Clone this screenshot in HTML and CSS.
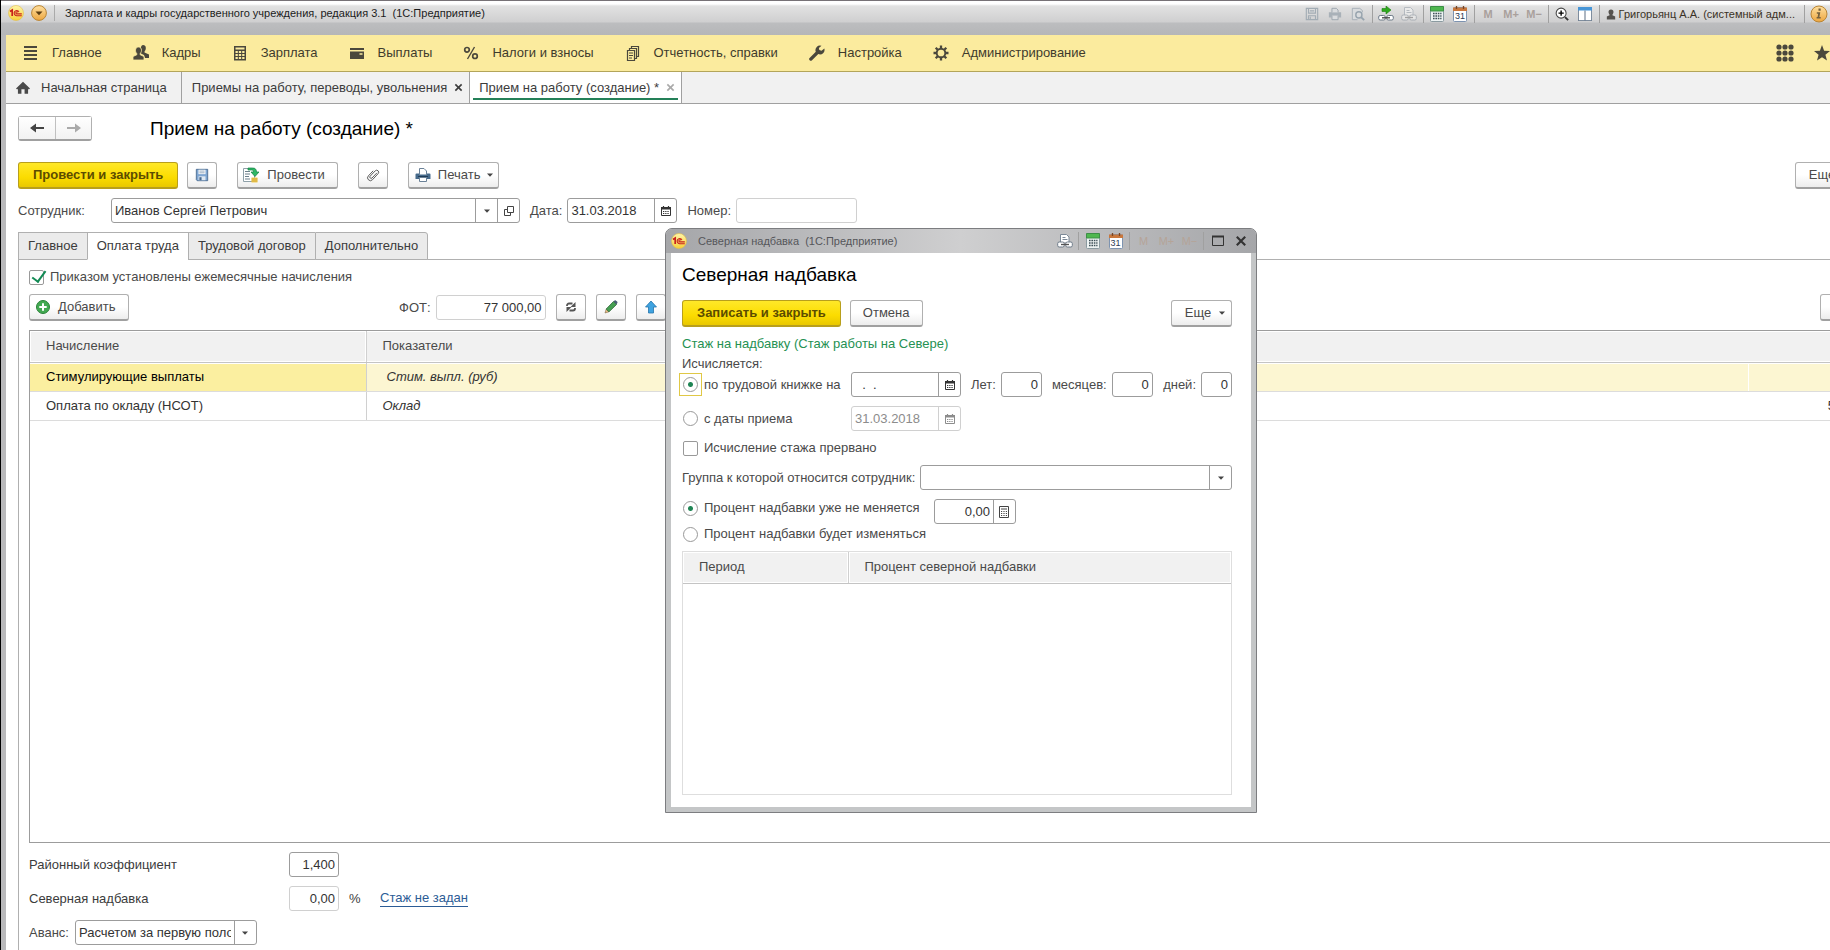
FILE: index.html
```html
<!DOCTYPE html>
<html lang="ru">
<head>
    <meta charset="UTF-8">
    <meta name="viewport" content="width=device-width, initial-scale=1.0">
    <title>Зарплата и кадры государственного учреждения, редакция 3.1</title>
    <link rel="stylesheet" href="styles.css">
</head>
<body>

    <svg class="sprite" xmlns="http://www.w3.org/2000/svg">
        <defs>
            <linearGradient id="g-sun" x1="0" y1="0" x2="0" y2="1"><stop offset="0" stop-color="#fff6a8"/><stop offset="1" stop-color="#f7cf3a"/></linearGradient>
            <linearGradient id="g-orange" x1="0" y1="0" x2="0" y2="1"><stop offset="0" stop-color="#ffe0a0"/><stop offset="1" stop-color="#eda63f"/></linearGradient>
        </defs>
        <symbol id="logo" viewBox="0 0 16 16">
            <circle cx="8" cy="8" r="7.5" fill="url(#g-sun)" stroke="#e3bd4a" stroke-width=".6"/>
            <path d="M2 6.5L4.2 5v6" fill="none" stroke="#c8201c" stroke-width="1.7"/>
            <path d="M11 6.8a2.6 2.6 0 1 0-2.4 3.9h5.2M10 7.4a1.1 1.1 0 1 0-1.2 1.5h5" fill="none" stroke="#c8201c" stroke-width="1.1"/>
        </symbol>
        <symbol id="round-down" viewBox="0 0 16 16">
            <circle cx="8" cy="8" r="7.4" fill="url(#g-orange)" stroke="#b98535"/>
            <path d="M4.5 6.5h7L8 10.3z" fill="#5a3c12"/>
        </symbol>
        <symbol id="floppy" viewBox="0 0 16 16">
            <path d="M1.5 1.5h13v13h-12l-1-1z" fill="#7fa6d2" stroke="#48698f"/>
            <path d="M4 2h8v5H4z" fill="#fff"/>
            <path d="M5 3.5h6M5 5.5h6" stroke="#8aa0b8"/>
            <path d="M4 9.5h8V14H4z" fill="#dfe8f2"/>
            <path d="M5 10.5h2.5V14H5z" fill="#48698f"/>
        </symbol>
        <symbol id="floppy-off" viewBox="0 0 16 16">
            <path d="M1.5 1.5h13v13h-13zM4 2v5h8V2M5.5 4.5h5M4 14.5V10h8v4.5M6 11v3" fill="none" stroke="#a2acb4" stroke-width="1.3"/>
        </symbol>
        <symbol id="printer-off" viewBox="0 0 16 16">
            <path d="M1 6h14v6h-3V10H4v2H1z" fill="#a9b1b8"/>
            <path d="M4.5 6V1.5h5l2 2V6M4.5 10v4.5h7V10" fill="#dadcde" stroke="#98a2aa"/>
        </symbol>
        <symbol id="preview-off" viewBox="0 0 16 16">
            <path d="M13 6V4l-3-2.5H1.5v13h6" fill="#d9dcde" stroke="#a2acb4"/>
            <circle cx="9" cy="9" r="3.5" fill="none" stroke="#97a4ae" stroke-width="1.6"/>
            <path d="M11.5 11.5l3.5 3.5" stroke="#97a4ae" stroke-width="2.2"/>
        </symbol>
        <symbol id="link-add" viewBox="0 0 16 16">
            <path d="M4 2.5h4V0l5 4-5 4V5.5H4z" fill="#2faa1e" stroke="#1b7c12" stroke-width=".6"/>
            <rect x=".7" y="9.5" width="6.500" height="4.500" rx="1.500" fill="#fff" stroke="#6d7a88"/>
            <rect x="8.800" y="9.500" width="6.500" height="4.500" rx="1.500" fill="#fff" stroke="#6d7a88"/>
            <path d="M4 11.800h8" stroke="#444" stroke-width="1.300"/>
        </symbol>
        <symbol id="link-print" viewBox="0 0 16 16">
            <path d="M3.500 9V1.500h6l2.500 2.500V9" fill="#fff" stroke="#7c8997"/>
            <path d="M5.500 4.500h3M5.500 6.500h5" stroke="#7c8997"/>
            <rect x=".7" y="9" width="6.500" height="5" rx="1.500" fill="#fff" stroke="#6d7a88"/>
            <rect x="8.800" y="9" width="6.500" height="5" rx="1.500" fill="#fff" stroke="#6d7a88"/>
            <path d="M4 11.500h8" stroke="#555" stroke-width="1.300"/>
        </symbol>
        <symbol id="calc" viewBox="0 0 16 16">
            <rect x="1.500" y=".5" width="13" height="15" rx="1" fill="#eef3f3" stroke="#8a9aa0"/>
            <path d="M1.500 .5h13v4.500h-13z" fill="#4fb74f" stroke="#3c8f46"/>
            <path d="M4 7.500h8.500M4 10h8.500M4 12.500h8.500" stroke="#3e5058" stroke-width="1.500" stroke-dasharray="1.600 .8"/>
        </symbol>
        <symbol id="day-sheet" viewBox="0 0 16 16">
            <rect x="1.500" y="1.500" width="13" height="14" rx="1" fill="#fff" stroke="#7d93b0"/>
            <path d="M1 1.500h14V5H1z" fill="#c9773c"/>
            <path d="M4.500 0v3M11.500 0v3" stroke="#7b4520" stroke-width="1.300"/>
        </symbol>
        <symbol id="zoom" viewBox="0 0 16 16">
            <circle cx="7" cy="7" r="5.700" fill="#fff" stroke="#454545" stroke-width="1.200"/>
            <path d="M7 4v6M4 7h6" stroke="#000" stroke-width="1.600"/>
            <path d="M11.500 11.500l3.500 3.500" stroke="#333" stroke-width="2.200"/>
        </symbol>
        <symbol id="split" viewBox="0 0 16 16">
            <rect x=".5" y=".5" width="15" height="15" fill="#fff" stroke="#6f7f92"/>
            <path d="M0 0h16v4H0z" fill="#4795d6"/>
            <path d="M8 4v12" stroke="#6f7f92" stroke-width="1.300"/>
        </symbol>
        <symbol id="user" viewBox="0 0 12 14">
            <path d="M6 1a3 3 0 0 1 3 3c0 1.500-.8 2.500-1.300 3.200V8l3.300 1.500V13H1V9.500L4.300 8v-.8C3.800 6.500 3 5.500 3 4a3 3 0 0 1 3-3z" fill="#55524e"/>
        </symbol>
        <symbol id="info" viewBox="0 0 18 18">
            <circle cx="9" cy="9" r="8" fill="url(#g-orange)" stroke="#b98535"/>
            <path d="M8.500 3.500h2.200v2.200H8.500zM6.800 7.200h3.500L9.400 12h1.300v1.400H6.600V12h1l.6-3.300H6.800z" fill="#75603d"/>
        </symbol>
        <symbol id="list" viewBox="0 0 16 16"><path d="M1 2h13M1 6h13M1 10h13M1 14h13" stroke="#4b483c" stroke-width="2"/></symbol>
        <symbol id="people" viewBox="0 0 16 16">
            <path d="M10 0a3 3 0 0 1 2.800 3.200c0 1.400-.5 2.400-1.300 3.200v1.200L16 9.500V13h-4l-1-3-3-1.500V2.500C8 1 9 0 10 0z" fill="#4b483c"/>
            <path d="M5.500 2c1.900 0 3 1.400 3 3.200S7.600 8 7.200 8.600v1.200L11 11.500V15H0v-3.500l3.800-1.700V8.600C3.300 8 2.500 7 2.500 5.200S3.600 2 5.500 2z" fill="#4b483c" stroke="#fbeb9e" stroke-width=".8"/>
        </symbol>
        <symbol id="abacus" viewBox="0 0 16 16">
            <path d="M2 1h12v14.500H2z" fill="#4b483c"/>
            <path d="M3.500 2.500h9v2h-9z" fill="#fbeb9e"/>
            <path d="M3.500 7h9M3.500 10h9M3.500 13h9" stroke="#fbeb9e" stroke-width="2" stroke-dasharray="2.300 1.050"/>
        </symbol>
        <symbol id="wallet" viewBox="0 0 16 16">
            <path d="M1 3h14v2H1zM1 6.500h14V14H1z" fill="#4b483c"/>
            <path d="M10.500 9h3" stroke="#fbeb9e" stroke-width="1.500"/>
        </symbol>
        <symbol id="percent" viewBox="0 0 16 16">
            <circle cx="4" cy="4.800" r="2.300" fill="none" stroke="#4b483c" stroke-width="1.700"/>
            <circle cx="12" cy="11.200" r="2.300" fill="none" stroke="#4b483c" stroke-width="1.700"/>
            <path d="M11.500 2L4.500 14" stroke="#4b483c" stroke-width="1.400"/>
        </symbol>
        <symbol id="papers" viewBox="0 0 16 16">
            <path d="M2.500 5.500h7v10h-7zM4.500 5V3.500h7v10H10M6.500 3V1.500h7v10H12" fill="none" stroke="#4b483c" stroke-width="1.200"/>
            <path d="M4 8h4M4 10.500h4M4 13h3" stroke="#4b483c"/>
        </symbol>
        <symbol id="wrench" viewBox="0 0 16 16">
            <path d="M12.500 .8a4.500 4.500 0 0 0-5.700 5.900L.6 12.900a1.500 1.500 0 0 0 2.400 2.300L9.300 9a4.500 4.500 0 0 0 6-5.600L12.500 5.700 10.300 5l-.4-2z" fill="#4b483c"/>
        </symbol>
        <symbol id="gear" viewBox="0 0 16 16">
            <circle cx="8" cy="8" r="4.300" fill="none" stroke="#4b483c" stroke-width="1.900"/>
            <path d="M8 .5v3M8 12.500v3M.5 8h3M12.500 8h3M2.700 2.700l2 2M11.300 11.300l2 2M13.300 2.700l-2 2M4.700 11.300l-2 2" stroke="#4b483c" stroke-width="2.300"/>
        </symbol>
        <symbol id="dots" viewBox="0 0 18 18">
            <g fill="#4b483c"><circle cx="3" cy="3" r="2.600"/><circle cx="9" cy="3" r="2.600"/><circle cx="15" cy="3" r="2.600"/><circle cx="3" cy="9" r="2.600"/><circle cx="9" cy="9" r="2.600"/><circle cx="15" cy="9" r="2.600"/><circle cx="3" cy="15" r="2.600"/><circle cx="9" cy="15" r="2.600"/><circle cx="15" cy="15" r="2.600"/></g>
        </symbol>
        <symbol id="star" viewBox="0 0 16 16"><path d="M8 0l2.100 5.700 5.900.3-4.600 3.800L13 15.500 8 12.200l-5 3.300 1.600-5.700L0 6l5.900-.3z" fill="#4b483c"/></symbol>
        <symbol id="home" viewBox="0 0 16 16"><path d="M8 1.500L0 9l1.300 1.200.9-.8V15h4v-5h3.600v5h4V9.400l.9.8L16 9z" fill="#4a4a4a"/></symbol>
        <symbol id="cross" viewBox="0 0 10 10"><path d="M1.500 1.500l7 7M8.500 1.500l-7 7" stroke="currentColor" stroke-width="1.800"/></symbol>
        <symbol id="maximize" viewBox="0 0 12 12"><path d="M.5 1.500h11v9H.5z" fill="none" stroke="#333"/><path d="M0 1.500h12" stroke="#333" stroke-width="2"/></symbol>
        <symbol id="arrow-left" viewBox="0 0 16 12"><path d="M1 6l6-4.500V5h8v2H7v3.500z" fill="currentColor"/></symbol>
        <symbol id="arrow-right" viewBox="0 0 16 12"><path d="M15 6L9 1.500V5H1v2h8v3.500z" fill="currentColor"/></symbol>
        <symbol id="post" viewBox="0 0 16 16">
            <path d="M.5 1.500h11v13H.5z" fill="#fff" stroke="#8ea0a8"/>
            <path d="M2 4.500h5M2 7h5M2 9.500h4M2 12h5" stroke="#6b7f8a"/>
            <path d="M5 1h4.500c3 0 4 1.500 4 4H16l-4 4.500L8 5h2.500c0-1.500-.5-2-2-2H5z" fill="#2fb765" stroke="#148245" stroke-width=".7"/>
            <path d="M8.500 10.500h6v5h-6z" fill="#f3cf5b"/>
            <path d="M8.500 12h6M8.500 14h6" stroke="#c39a2a" stroke-width=".8"/>
        </symbol>
        <symbol id="clip" viewBox="0 0 16 16">
            <path d="M12.500 5.500l-5.700 6a1.500 1.500 0 0 1-2.200-2l6-6.300a2.300 2.300 0 0 1 3.300 3.200l-6.500 7a3.200 3.200 0 0 1-4.700-4.400l5.500-5.800" fill="none" stroke="#555" stroke-width="1.100"/>
        </symbol>
        <symbol id="printer" viewBox="0 0 16 16">
            <path d="M1.500 6.500h13a1 1 0 0 1 1 1V12H.5V7.500a1 1 0 0 1 1-1z" fill="#466a8b"/>
            <path d="M4.500 7.500v-6H9L11.500 4v3.500" fill="#fff" stroke="#6a8197"/>
            <path d="M3 9.500h10" stroke="#203c57"/>
            <path d="M4.500 10.500h7v4h-7z" fill="#fff" stroke="#6a8197"/>
        </symbol>
        <symbol id="caret" viewBox="0 0 6 4"><path d="M0 .5h6L3 3.800z" fill="#444"/></symbol>
        <symbol id="open" viewBox="0 0 10 10"><path d="M3.500 .5h6v6h-6zM3.500 3.500h-3v6h6V6.500" fill="none" stroke="#444"/></symbol>
        <symbol id="calendar" viewBox="0 0 10 10">
            <path d="M.5 2h9v7.500h-9z" fill="none" stroke="currentColor"/>
            <path d="M0 1h10v2.500H0z" fill="currentColor"/>
            <path d="M2.500 0v2M7.500 0v2" stroke="currentColor" stroke-width="1.200"/>
            <path d="M2 5.500h6M2 7.500h6" stroke="currentColor" stroke-dasharray="1.300 .9"/>
        </symbol>
        <symbol id="calculator" viewBox="0 0 10 12">
            <path d="M.5 .5h9v11h-9zM2 3h6" fill="none" stroke="#444"/>
            <path d="M2 5.500h6M2 7.500h6M2 9.500h6" stroke="#444" stroke-dasharray="1.200 1.200"/>
        </symbol>
        <symbol id="add" viewBox="0 0 14 14">
            <circle cx="7" cy="7" r="6.500" fill="#43a952" stroke="#2b8239"/>
            <path d="M7 3.300v7.400M3.300 7h7.400" stroke="#fff" stroke-width="2"/>
        </symbol>
        <symbol id="refresh" viewBox="0 0 14 14">
            <path d="M3 6V5.500A2 2 0 0 1 5 3.500h3.500M11 8v.5a2 2 0 0 1-2 2H5.500" fill="none" stroke="#555" stroke-width="1.800"/>
            <path d="M11.500 2v5h-5zM2.500 12V7h5z" fill="#555"/>
        </symbol>
        <symbol id="pencil" viewBox="0 0 14 14">
            <path d="M1 13l1.200-4L5 11.800z" fill="#e8bc85" stroke="#6b5636" stroke-width=".5"/>
            <path d="M2.200 9L9.500 1.500l3 3L5 11.800z" fill="#46a053" stroke="#2c6636" stroke-width=".8"/>
            <path d="M9.500 1.500L10.600 .6c.6-.5 1.200-.3 1.800.3l.7.7c.6.600.6 1.200 0 1.800l-.7 1z" fill="#4a6076"/>
        </symbol>
        <symbol id="up" viewBox="0 0 12 14"><path d="M6 1l5.500 6H8.500v6h-5V7H.5z" fill="#3fa3e0" stroke="#2373ab" stroke-width=".8"/></symbol>
    </svg>

    <div class="app">
        <header class="titlebar">
            <svg class="icon"><use href="#logo"/></svg>
            <button class="plain-button" type="button" aria-label="Меню"><svg class="icon"><use href="#round-down"/></svg></button>
            <span class="titlebar-text">Зарплата и кадры государственного учреждения, редакция 3.1&nbsp; (1С:Предприятие)</span>
            <div class="tools">
                <div class="tool-group first">
                    <button type="button" aria-label="Сохранить"><svg><use href="#floppy-off"/></svg></button>
                    <button type="button" aria-label="Печать"><svg><use href="#printer-off"/></svg></button>
                    <button type="button" aria-label="Просмотр"><svg><use href="#preview-off"/></svg></button>
                </div>
                <div class="tool-group">
                    <button type="button" aria-label="Получить ссылку"><svg class="big"><use href="#link-add"/></svg></button>
                    <button type="button" class="faded" aria-label="Перейти по ссылке"><svg class="big"><use href="#link-print"/></svg></button>
                </div>
                <div class="tool-group">
                    <button type="button" aria-label="Калькулятор"><svg class="big"><use href="#calc"/></svg></button>
                    <button type="button" class="day" aria-label="Календарь"><svg class="big"><use href="#day-sheet"/></svg><span>31</span></button>
                </div>
                <div class="tool-group memory">
                    <button type="button">M</button>
                    <button type="button">M+</button>
                    <button type="button">M−</button>
                </div>
                <div class="tool-group">
                    <button type="button" aria-label="Масштаб"><svg><use href="#zoom"/></svg></button>
                    <button type="button" aria-label="Панели"><svg><use href="#split"/></svg></button>
                </div>
                <div class="tool-group account">
                    <svg class="user-icon"><use href="#user"/></svg>
                    <span>Григорьянц А.А. (системный адм...</span>
                </div>
                <div class="tool-group about">
                    <button type="button" aria-label="О программе"><svg><use href="#info"/></svg></button>
                </div>
            </div>
        </header>

        <nav class="sections">
            <a href="#"><svg class="icon"><use href="#list"/></svg>Главное</a>
            <a href="#"><svg class="icon"><use href="#people"/></svg>Кадры</a>
            <a href="#"><svg class="icon"><use href="#abacus"/></svg>Зарплата</a>
            <a href="#"><svg class="icon"><use href="#wallet"/></svg>Выплаты</a>
            <a href="#"><svg class="icon"><use href="#percent"/></svg>Налоги и взносы</a>
            <a href="#"><svg class="icon"><use href="#papers"/></svg>Отчетность, справки</a>
            <a href="#"><svg class="icon"><use href="#wrench"/></svg>Настройка</a>
            <a href="#"><svg class="icon"><use href="#gear"/></svg>Администрирование</a>
            <div class="sections-right">
                <button class="plain-button" type="button" aria-label="Функции"><svg class="dots-icon"><use href="#dots"/></svg></button>
                <button class="plain-button" type="button" aria-label="Избранное"><svg class="icon"><use href="#star"/></svg></button>
            </div>
        </nav>

        <div class="open-windows">
            <a class="window-tab home" href="#"><svg class="home-icon"><use href="#home"/></svg>Начальная страница</a>
            <a class="window-tab" href="#">Приемы на работу, переводы, увольнения <svg class="close-icon"><use href="#cross"/></svg></a>
            <a class="window-tab current" href="#">Прием на работу (создание) * <svg class="close-icon"><use href="#cross"/></svg></a>
        </div>

        <main class="form">
            <div class="form-header">
                <div class="history">
                    <button type="button" aria-label="Назад"><svg><use href="#arrow-left"/></svg></button>
                    <button type="button" class="off" aria-label="Вперед"><svg><use href="#arrow-right"/></svg></button>
                </div>
                <h1>Прием на работу (создание) *</h1>
            </div>

            <div class="commands">
                <button class="btn primary" type="button">Провести и закрыть</button>
                <button class="btn square save" type="button" aria-label="Записать"><svg class="icon"><use href="#floppy"/></svg></button>
                <button class="btn post" type="button"><svg class="icon"><use href="#post"/></svg>Провести</button>
                <button class="btn square" type="button" aria-label="Файлы"><svg class="icon"><use href="#clip"/></svg></button>
                <button class="btn print" type="button"><svg class="icon"><use href="#printer"/></svg>Печать<svg class="caret"><use href="#caret"/></svg></button>
                <button class="btn more" type="button">Еще<svg class="caret"><use href="#caret"/></svg></button>
            </div>

            <div class="fields">
                <label class="employee-label" for="employee">Сотрудник:</label>
                <div class="field employee">
                    <input id="employee" type="text" value="Иванов Сергей Петрович">
                    <button type="button" aria-label="Выбрать"><svg class="caret"><use href="#caret"/></svg></button>
                    <button type="button" aria-label="Открыть"><svg class="small-icon"><use href="#open"/></svg></button>
                </div>
                <label for="date">Дата:</label>
                <div class="field date">
                    <input id="date" type="text" value="31.03.2018">
                    <button type="button" aria-label="Календарь"><svg class="small-icon"><use href="#calendar"/></svg></button>
                </div>
                <label for="number">Номер:</label>
                <div class="field number light"><input id="number" type="text"></div>
            </div>

            <div class="pages">
                <button type="button">Главное</button>
                <button type="button" class="active">Оплата труда</button>
                <button type="button">Трудовой договор</button>
                <button type="button">Дополнительно</button>
            </div>

            <section class="panel">
                <label class="check"><input type="checkbox" checked>Приказом установлены ежемесячные начисления</label>

                <div class="panel-commands">
                    <button class="btn add" type="button"><svg><use href="#add"/></svg>Добавить</button>
                    <label class="fot-label" for="fot">ФОТ:</label>
                    <div class="field fot light"><input id="fot" type="text" value="77 000,00"></div>
                    <button class="btn square" type="button" aria-label="Обновить"><svg><use href="#refresh"/></svg></button>
                    <button class="btn square" type="button" aria-label="Изменить"><svg><use href="#pencil"/></svg></button>
                    <button class="btn square" type="button" aria-label="Вверх"><svg><use href="#up"/></svg></button>
                    <button class="btn panel-more" type="button" aria-label="Еще"></button>
                </div>

                <div class="table-box accruals">
                    <table>
                        <thead>
                            <tr><th class="col-name">Начисление</th><th>Показатели</th><th class="col-sum"></th></tr>
                        </thead>
                        <tbody>
                            <tr class="selected"><td>Стимулирующие выплаты</td><td class="indicator">Стим. выпл. (руб)</td><td></td></tr>
                            <tr><td>Оплата по окладу (НСОТ)</td><td class="indicator">Оклад</td><td class="sum">5</td></tr>
                        </tbody>
                    </table>
                </div>

                <div class="summary">
                    <label for="district">Районный коэффициент</label>
                    <div class="field short"><input id="district" type="text" value="1,400"></div>
                </div>
                <div class="summary">
                    <label for="northern">Северная надбавка</label>
                    <div class="field short light"><input id="northern" type="text" value="0,00"></div>
                    <span class="percent">%</span>
                    <a href="#">Стаж не задан</a>
                </div>
                <div class="advance">
                    <label for="advance">Аванс:</label>
                    <div class="field">
                        <select id="advance"><option>Расчетом за первую половину месяца</option></select>
                        <span class="drop"><svg class="caret"><use href="#caret"/></svg></span>
                    </div>
                </div>
            </section>
        </main>
    </div>

    <div class="dialog" role="dialog" aria-labelledby="dialog-title">
        <div class="dialog-bar">
            <svg class="icon"><use href="#logo"/></svg>
            <span class="dialog-bar-text">Северная надбавка&nbsp; (1С:Предприятие)</span>
            <div class="tools">
                <div class="tool-group first"><button type="button" aria-label="Ссылка"><svg class="big"><use href="#link-print"/></svg></button></div>
                <div class="tool-group">
                    <button type="button" aria-label="Калькулятор"><svg class="big"><use href="#calc"/></svg></button>
                    <button type="button" class="day" aria-label="Календарь"><svg class="big"><use href="#day-sheet"/></svg><span>31</span></button>
                </div>
                <div class="tool-group memory">
                    <button type="button">M</button>
                    <button type="button">M+</button>
                    <button type="button">M−</button>
                </div>
                <div class="tool-group">
                    <button type="button" aria-label="Развернуть"><svg class="window-icon"><use href="#maximize"/></svg></button>
                    <button type="button" aria-label="Закрыть"><svg class="window-icon"><use href="#cross"/></svg></button>
                </div>
            </div>
        </div>

        <div class="dialog-body">
            <h2 id="dialog-title">Северная надбавка</h2>

            <div class="dialog-commands">
                <button class="btn primary" type="button">Записать и закрыть</button>
                <button class="btn" type="button">Отмена</button>
                <button class="btn more" type="button">Еще<svg class="caret"><use href="#caret"/></svg></button>
            </div>

            <div class="group-title">Стаж на надбавку (Стаж работы на Севере)</div>
            <div class="group-hint">Исчисляется:</div>

            <div class="dialog-row">
                <label class="radio start"><input class="focused" type="radio" name="from" checked>по трудовой книжке на</label>
                <div class="field date"><input type="text" value="&nbsp; .&nbsp; ." aria-label="Дата по трудовой книжке"><button type="button" aria-label="Календарь"><svg class="small-icon"><use href="#calendar"/></svg></button></div>
                <label class="unit">Лет: <span class="field"><input type="text" value="0"></span></label>
                <label class="unit">месяцев: <span class="field"><input type="text" value="0"></span></label>
                <label class="unit days">дней: <span class="field"><input type="text" value="0"></span></label>
            </div>

            <div class="dialog-row">
                <label class="radio start"><input type="radio" name="from">с даты приема</label>
                <div class="field date light off"><input type="text" value="31.03.2018" aria-label="Дата приема" disabled><button type="button" aria-label="Календарь" disabled><svg class="small-icon"><use href="#calendar"/></svg></button></div>
            </div>

            <label class="check interrupted"><input type="checkbox">Исчисление стажа прервано</label>

            <div class="dialog-row">
                <label class="group-label" for="group">Группа к которой относится сотрудник:</label>
                <div class="field grow">
                    <select id="group"><option></option></select>
                    <span class="drop"><svg class="caret"><use href="#caret"/></svg></span>
                </div>
            </div>

            <div class="percent-choice">
                <div class="percent-options">
                    <label class="radio"><input type="radio" name="percent" checked>Процент надбавки уже не меняется</label>
                    <label class="radio"><input type="radio" name="percent">Процент надбавки будет изменяться</label>
                </div>
                <div class="field rate"><input type="text" value="0,00" aria-label="Процент"><button type="button" aria-label="Калькулятор"><svg class="calculator-icon"><use href="#calculator"/></svg></button></div>
            </div>

            <div class="table-box periods">
                <table>
                    <thead><tr><th class="col-period">Период</th><th>Процент северной надбавки</th></tr></thead>
                </table>
            </div>
        </div>
    </div>

</body>
</html>
```
FILE: styles.css
```css
* {
    box-sizing: border-box;
}
body {
    margin: 0;
    font-family: "Liberation Sans", Arial, sans-serif;
    font-size: 13px;
    line-height: 16px;
    color: #4a4a4a;
    background-color: white;
    overflow: hidden;
}
button, input, select {
    font: inherit;
    color: inherit;
}
a {
    color: inherit;
    text-decoration: none;
}
svg {
    display: block;
    flex: none;
}
.sprite {
    position: absolute;
    width: 0;
    height: 0;
}
.icon {
    width: 16px;
    height: 16px;
}
.small-icon {
    width: 10px;
    height: 10px;
}
.caret {
    width: 6px;
    height: 4px;
}
.plain-button {
    border: none;
    background: none;
    padding: 0;
}
.app {
    height: 100vh;
    display: flex;
    flex-direction: column;
    border-left: 1px solid black;
    background-color: #b9b9bb;
    overflow: hidden;
}

/* title bar */
.titlebar {
    height: 35px;
    flex: none;
    display: flex;
    align-items: flex-start;
    gap: 7px;
    padding: 4px 2px 0 7px;
    border-top: 1px solid #777276;
    background: linear-gradient(#fff 0, #fff 3px, #e2e2e2 5px, #cfcfd0 21px, #bcbdbf 22px, #b5b6b8 34px);
    font-size: 11px;
    color: #1c1c1c;
}
.titlebar-text {
    border-left: 1px solid #aaa;
    padding-left: 10px;
}
.tools {
    margin-left: auto;
    display: flex;
}
.tool-group {
    display: flex;
    align-items: center;
    height: 18px;
    padding: 0 2px;
    border-left: 1px solid #a0a0a0;
}
.tool-group.first {
    border-left: none;
}
.tool-group button {
    width: 23px;
    padding: 0;
    border: none;
    background: none;
    display: flex;
    justify-content: center;
}
.tool-group svg {
    width: 14px;
    height: 14px;
}
.tool-group .big {
    width: 16px;
    height: 16px;
}
.tool-group .faded {
    opacity: 0.4;
}
/* day number over the calendar sheet */
.tool-group .day {
    position: relative;
}
.day span {
    position: absolute;
    left: 0;
    right: 0;
    top: 5px;
    text-align: center;
    font-size: 9px;
    line-height: 10px;
    color: #2b3b55;
}
.memory button {
    color: #a9a09c;
    font-weight: bold;
}
.account {
    gap: 3px;
    padding: 0 9px 0 6px;
    color: #3a3226;
}
.tool-group .user-icon {
    width: 10px;
    height: 13px;
}
.about {
    padding: 0 0 0 5px;
}
.about button {
    width: 18px;
}
.about svg {
    width: 18px;
    height: 18px;
}

/* sections */
.sections {
    height: 37px;
    flex: none;
    display: flex;
    align-items: center;
    gap: 31px;
    margin-left: 5px;
    padding: 0 0 0 17px;
    background-color: #fbeb9e;
    border-bottom: 1px solid #b3a55a;
    color: #3f3b2c;
}
.sections a {
    display: flex;
    align-items: center;
    gap: 13px;
}
.sections-right {
    margin-left: auto;
    display: flex;
    align-items: center;
    gap: 20px;
}
.dots-icon {
    width: 18px;
    height: 18px;
}

/* open windows */
.open-windows {
    height: 32px;
    flex: none;
    display: flex;
    margin-left: 5px;
    background-color: #f1f1f1;
    border-bottom: 1px solid #a0a0a0;
}
.window-tab {
    display: flex;
    align-items: center;
    gap: 7px;
    padding: 0 6px 0 10px;
    border-right: 1px solid #a0a0a0;
    color: #3c3c3c;
}
.window-tab.home {
    gap: 11px;
    padding-right: 14px;
}
.window-tab.current {
    padding: 0 6px 0 9px;
    background: linear-gradient(#248058, #248058) 3px 26px / calc(100% - 6px) 2px no-repeat white;
}
.home-icon {
    width: 14px;
    height: 15px;
}
.close-icon {
    width: 9px;
    height: 9px;
}
.current .close-icon {
    color: #aaa;
}

/* document form, runs past the right edge of the screen */
.form {
    flex: 1;
    min-height: 0;
    display: flex;
    flex-direction: column;
    width: calc(100% + 21px);
    margin-left: 5px;
    padding: 12px 0 0 12px;
    background-color: white;
}
.form-header {
    display: flex;
    align-items: center;
    gap: 58px;
    margin-bottom: 21px;
}
h1, h2 {
    margin: 0;
    font-weight: normal;
    font-size: 19px;
    line-height: 24px;
    color: black;
}
.history {
    display: flex;
    height: 25px;
    border: 1px solid #b0b0b0;
    border-bottom: 2px solid #a0a0a0;
    border-radius: 3px;
}
.history button {
    width: 36px;
    padding: 0;
    border: none;
    background: linear-gradient(#fff, #f2f2f2);
    display: flex;
    align-items: center;
    justify-content: center;
    color: #444;
}
.history svg {
    width: 16px;
    height: 12px;
}
.history .off {
    border-left: 1px solid #c0c0c0;
    color: #aaa;
}
.btn {
    display: flex;
    align-items: center;
    justify-content: center;
    height: 27px;
    padding: 0 12px;
    border: 1px solid #b0b0b0;
    border-bottom: 2px solid #a0a0a0;
    border-radius: 3px;
    background: linear-gradient(#fff 50%, #ededed);
    color: #4a4a4a;
}
.btn.primary {
    padding: 0 14px;
    background: linear-gradient(#ffe829, #fbdc00 60%, #e9c800);
    border-color: #b89f1c;
    color: #5c4c00;
    font-weight: bold;
}
.btn.square {
    width: 30px;
    padding: 0;
}
.btn.square svg {
    width: 14px;
    height: 14px;
}
.commands {
    display: flex;
    gap: 20px;
    margin-bottom: 9px;
}
.commands .save {
    margin-left: -11px;
}
.btn.post {
    padding: 0 12px 0 5px;
    gap: 8px;
}
.btn.print {
    padding: 0 5px 0 6px;
    gap: 7px;
}
.btn.more {
    margin-left: auto;
    width: 61px;
    padding: 0 5px 0 12px;
    gap: 8px;
}
.fields {
    display: flex;
    align-items: center;
    gap: 10px;
    margin-bottom: 9px;
}
.field {
    display: flex;
    height: 25px;
    border: 1px solid #9c9c9c;
    border-radius: 3px;
    background-color: white;
    color: #333;
}
.field input, .field select {
    flex: 1;
    min-width: 0;
    width: 100%;
    border: none;
    outline: none;
    padding: 0 3px;
    background: none;
    appearance: none;
}
.field button, .field .drop {
    width: 22px;
    flex: none;
    padding: 0;
    border: none;
    border-left: 1px solid #9c9c9c;
    background: none;
    display: flex;
    align-items: center;
    justify-content: center;
}
.field.light {
    border-color: #d0d0d0;
}
.field.off {
    color: #8c8c8c;
}
.field.off button {
    border-color: #d0d0d0;
}
.employee-label {
    width: 83px;
}
.employee {
    width: 409px;
}
.date {
    width: 110px;
}
.fields .date, .fields .number {
    margin-left: -5px;
}
.number {
    width: 121px;
}

/* form pages */
.pages {
    display: flex;
    position: relative;
    margin-bottom: -1px;
}
.pages button {
    height: 28px;
    padding: 0 9px;
    border: 1px solid #b0b0b0;
    border-right: none;
    background-color: #ebebeb;
    color: #3c3c3c;
}
.pages button:last-child {
    border-right: 1px solid #b0b0b0;
    border-radius: 0 3px 0 0;
}
.pages button.active {
    background-color: white;
    border-bottom-color: white;
}
.panel {
    flex: 1;
    min-height: 0;
    display: flex;
    flex-direction: column;
    padding: 9px 10px 5px;
    border: 1px solid #b0b0b0;
    border-width: 1px 0 0 1px;
}
.check, .radio {
    display: flex;
    align-items: center;
    gap: 6px;
}
.check input, .radio input {
    appearance: none;
    position: relative;
    flex: none;
    width: 15px;
    height: 15px;
    margin: 0;
    border: 1px solid #999;
    border-radius: 2px;
    background-color: white;
}
.check input:checked::before {
    content: "";
    display: block;
    width: 6px;
    height: 12px;
    margin: -3px 0 0 5px;
    border: solid #128a54;
    border-width: 0 2px 2px 0;
    transform: rotate(36deg);
}
.radio input {
    border-radius: 50%;
}
.radio input:checked {
    background: radial-gradient(circle, #1f8554 0, #1f8554 2px, white 3px);
}
/* focus frame round the radio */
.radio .focused::after {
    content: "";
    position: absolute;
    inset: -5px;
    border: 1px solid #e0c846;
}
.panel-commands {
    display: flex;
    align-items: center;
    gap: 10px;
    margin: 9px 0;
}
.btn.add {
    width: 100px;
    padding: 0 6px;
    gap: 8px;
    justify-content: flex-start;
}
.add svg {
    width: 14px;
    height: 14px;
}
.fot-label {
    margin-left: 260px;
}
.fot {
    width: 110px;
    margin-left: -5px;
}
.fot input, .short input, .unit input, .rate input {
    text-align: right;
}
.btn.panel-more {
    width: 24px;
    margin-left: auto;
}
.table-box {
    border: 1px solid #9c9c9c;
    background-color: white;
}
.accruals {
    flex: 1;
    min-height: 0;
}
table {
    width: 100%;
    border-collapse: collapse;
    table-layout: fixed;
}
th, td {
    height: 29px;
    padding: 0 16px;
    text-align: left;
    font-weight: normal;
    border-bottom: 1px solid #dcdcdc;
}
th {
    height: 31px;
    background-color: #f1f1f1;
    border-bottom-color: #c4c4c4;
    box-shadow: inset 0 0 0 1px white;
}
th + th, td + td {
    border-left: 1px solid #d0d0d0;
}
.accruals th:last-child, .accruals td:last-child {
    border-left: none;
}
.accruals th:nth-child(2), .accruals th:last-child {
    box-shadow: inset 0 1px 0 white, inset 0 -1px 0 white;
}
td {
    color: #333;
}
.col-name {
    width: 336px;
}
.col-sum {
    width: 97px;
}
.selected td {
    background-color: #fcf6d2;
    box-shadow: inset 0 1px 0 white;
}
.selected td:first-child {
    background-color: #fbefa0;
    color: black;
}
.selected td:last-child {
    border-left: 1px solid white;
}
.indicator {
    font-style: italic;
}
.selected .indicator {
    padding-left: 20px;
}
td.sum {
    text-align: right;
    padding: 0 10px;
}
.summary, .advance {
    display: flex;
    align-items: center;
    margin-top: 9px;
}
.summary {
    color: #3c3c3c;
}
.summary label {
    width: 260px;
}
.short {
    width: 50px;
}
.percent {
    width: 41px;
    padding-left: 10px;
}
.summary a {
    color: #2c5c96;
    border-bottom: 1px solid #2c5c96;
}
.advance {
    gap: 6px;
}
.advance .field {
    width: 182px;
}

/* dialog window */
.dialog {
    position: absolute;
    left: 665px;
    top: 228px;
    width: 592px;
    padding: 0 5px 5px;
    border: 1px solid #7c7d80;
    border-radius: 7px 7px 0 0;
    background-color: #c4c6c7;
}
.dialog-bar {
    height: 24px;
    display: flex;
    align-items: center;
    gap: 11px;
    margin: 0 -5px;
    padding: 0 2px 0 5px;
    border-radius: 6px 6px 0 0;
    background: linear-gradient(90deg, #a5a6a9, #cfcfd0 50%, #a5a6a9);
    font-size: 11px;
    color: #55565a;
}
.dialog-bar .memory button {
    color: #b5a498;
    font-weight: normal;
}
.tool-group .window-icon {
    width: 12px;
    height: 12px;
    color: #333;
}
.dialog-body {
    padding: 10px 19px 12px 11px;
    background-color: white;
}
.dialog-commands {
    display: flex;
    gap: 9px;
    margin: 13px 0 9px;
}
.group-title {
    color: #259152;
}
.group-hint {
    margin-top: 4px;
}
.dialog-row {
    display: flex;
    align-items: center;
    gap: 10px;
    margin-bottom: 9px;
}
.start {
    width: 159px;
    padding-left: 1px;
    white-space: nowrap;
}
.unit {
    display: flex;
    align-items: center;
    gap: 5px;
}
.unit .field {
    width: 41px;
}
.days {
    margin-left: auto;
}
.days .field {
    width: 31px;
}
.interrupted {
    margin: 9px 0;
    padding-left: 1px;
}
.group-label {
    margin-right: -5px;
}
.grow {
    flex: 1;
}
.percent-choice {
    display: flex;
    align-items: flex-start;
    gap: 8px;
    margin-bottom: 9px;
}
.percent-options {
    display: flex;
    flex-direction: column;
    gap: 10px;
    padding: 1px 0 0 1px;
}
.rate {
    width: 82px;
}
.calculator-icon {
    width: 10px;
    height: 12px;
}
.periods {
    height: 244px;
    border-color: #dedede;
}
.col-period {
    width: 165px;
}
```
